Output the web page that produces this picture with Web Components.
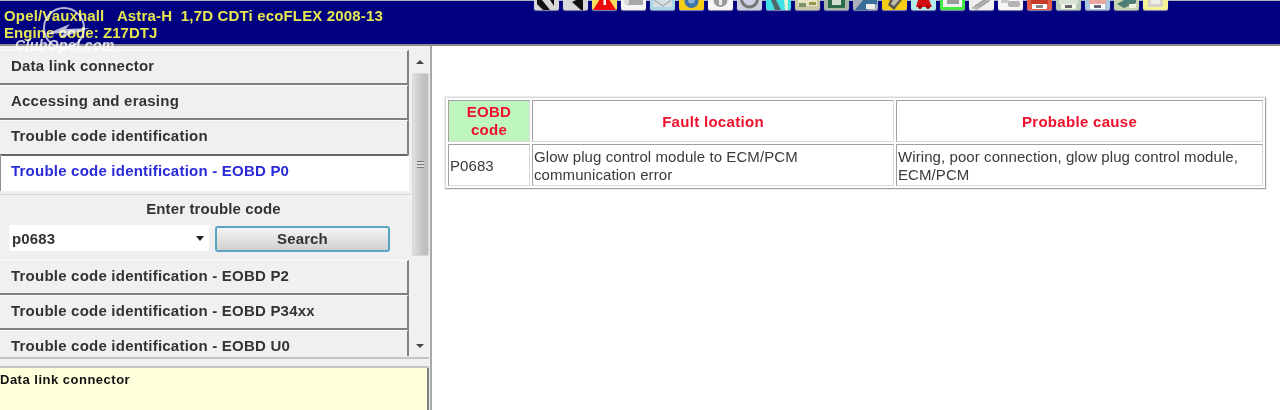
<!DOCTYPE html>
<html lang="en"><head><meta charset="utf-8"><title>Trouble code identification</title>
<style>
html,body{margin:0;padding:0;width:1280px;height:410px;overflow:hidden;background:#fff;font-family:"Liberation Sans",Arial,sans-serif}
</style></head><body>
<app-shell>
  <app-header slot="header" line1="Opel/Vauxhall   Astra-H  1,7D CDTi ecoFLEX 2008-13" line2="Engine code: Z17DTJ"></app-header>
  <side-panel slot="side">
    <menu-item>Data link connector</menu-item>
    <menu-item>Accessing and erasing</menu-item>
    <menu-item deep>Trouble code identification</menu-item>
    <menu-item active>Trouble code identification - EOBD P0</menu-item>
    <code-search value="p0683"></code-search>
    <menu-item>Trouble code identification - EOBD P2</menu-item>
    <menu-item>Trouble code identification - EOBD P34xx</menu-item>
    <menu-item>Trouble code identification - EOBD U0</menu-item>
    <info-box slot="info">Data link connector</info-box>
  </side-panel>
  <fault-table slot="main"></fault-table>
</app-shell>
<script>
function def(name, css, html){
  customElements.define(name, class extends HTMLElement{
    connectedCallback(){
      if(this.shadowRoot) return;
      const r=this.attachShadow({mode:'open'});
      r.innerHTML='<style>'+css+'</style>'+(typeof html==='function'?html(this):html);
    }
  });
}
const esc=s=>String(s||'').replace(/&/g,'&amp;').replace(/</g,'&lt;');

def('app-shell',`
:host{display:grid;grid-template-columns:432px 1fr;grid-template-rows:46px 364px;width:1280px;height:410px;filter:blur(.5px)}
.h{grid-column:1/3;display:block}
`,`<div class="h"><slot name="header"></slot></div><slot name="side"></slot><slot name="main"></slot>`);

const T=[
 ['#d8d8d8','<path d="M3 0h5l8 10H9L3 4z" fill="#111"/><path d="M16 0h4v6z" fill="#111"/>'],
 ['#d8d8d8','<path d="M13 0h7v10h-2L9 2z" fill="#111"/>'],
 ['#f5e060','<path d="M12.5 -8L24 10H1z" fill="#ee0a0a"/><rect x="11.5" y="0" width="2.5" height="5" fill="#fff"/>'],
 ['#f4f4f4','<rect x="6" y="0" width="16" height="5" fill="#a8a8a8"/><rect x="3" y="0" width="5" height="4" fill="#ddd"/>'],
 ['#a9d5e8','<rect x="3" y="0" width="19" height="7" fill="#d8dde0"/><path d="M4 0l9 6 8-6" stroke="#8a9aa6" fill="none"/>'],
 ['#f6cd16','<circle cx="12.5" cy="1" r="7" fill="#3f74a8"/><circle cx="12.5" cy="0" r="3.5" fill="#8db4d8"/>'],
 ['#f5f5f5','<circle cx="12.5" cy="0" r="7" fill="#9a9a9a"/><rect x="11" y="0" width="3" height="5" fill="#eee"/>'],
 ['#ccd0e2','<circle cx="12.5" cy="-1" r="8" fill="none" stroke="#777" stroke-width="3"/>'],
 ['#3fe0e6','<path d="M5 0h5l5 10H9z" fill="#4d6a6a"/><path d="M18 0h4v10h-3z" fill="#d8f4d4"/>'],
 ['#c8c8a6','<rect x="3" y="0" width="19" height="6" fill="#e6e6c4"/><rect x="14" y="2" width="7" height="3" fill="#9a9a48"/><rect x="4" y="3" width="7" height="4" fill="#7f8f70"/>'],
 ['#a9b7a8','<rect x="4" y="0" width="17" height="8" fill="#2e6a4e"/><rect x="8" y="0" width="9" height="5" fill="#cfe0cf"/>'],
 ['#aab0ba','<path d="M2 10L10 0h14v4l-10 6z" fill="#3a6e9a"/><rect x="13" y="4" width="9" height="5" fill="#ececec"/>'],
 ['#f6cd16','<path d="M8 0h12L12 10 6 5z" fill="#5c5c50"/><path d="M11 0h6l-5 6-3-2z" fill="#c0c0b0"/>'],
 ['#b4ecec','<path d="M7 0h11l3 7H5z" fill="#d40e0e"/><circle cx="9" cy="7" r="2" fill="#a00"/><circle cx="17" cy="7" r="2" fill="#a00"/>'],
 ['#46e646','<rect x="3" y="0" width="19" height="7" fill="#f2f2f2"/><rect x="7" y="0" width="12" height="4" fill="#9a9a9a"/>'],
 ['#f0f0f0','<path d="M2 8L14 0h8L8 10z" fill="#b8b8b8"/><path d="M6 6L16 0M10 7L20 1" stroke="#8a8a8a" fill="none"/>'],
 ['#f6f6f6','<rect x="10" y="1" width="12" height="6" rx="2" fill="#b4b4b4"/><rect x="3" y="0" width="8" height="3" fill="#c8c8c8"/>'],
 ['#e2604a','<rect x="4" y="0" width="17" height="4" fill="#c63a2a"/><rect x="5" y="4" width="15" height="5" rx="1" fill="#fff"/><rect x="9" y="5" width="7" height="3" fill="#888"/>'],
 ['#b8ccb8','<rect x="3" y="0" width="19" height="4" fill="#d6e2d2"/><rect x="5" y="4" width="15" height="5" fill="#f2f4ee"/><rect x="9" y="5" width="7" height="3" fill="#666"/>'],
 ['#a8c8e0','<rect x="4" y="0" width="17" height="4" fill="#e8a8a0"/><rect x="5" y="4" width="15" height="5" fill="#fff"/><rect x="9" y="5" width="7" height="3" fill="#667"/>'],
 ['#c8d4b0','<path d="M3 4L10 0h12v3L10 8z" fill="#4c7c74"/><rect x="15" y="4" width="7" height="4" fill="#eef0e0"/>'],
 ['#f6f094','<rect x="5" y="0" width="15" height="7" fill="#d4d4c8"/><rect x="8" y="0" width="9" height="4" fill="#eeeee4"/>']
];
def('tool-bar',`
:host{display:flex;gap:4px;height:10px;align-items:flex-start}
svg{display:block;width:25px;height:10px;box-shadow:0 1px 1px #8a8ab0;border-radius:0 0 2px 2px}
`,()=>T.map(t=>`<svg viewBox="0 0 25 10" style="background:${t[0]}" aria-hidden="true">${t[1]}</svg>`).join(''));

def('club-mark',`
:host{display:block;position:absolute;left:13px;top:9px;width:106px;height:46px;pointer-events:none}
svg{position:absolute;left:27px;top:0;width:48px;height:40px;overflow:visible}
span{position:absolute;left:2px;top:31px;font:italic bold 14px/9px "Liberation Sans",Arial,sans-serif;letter-spacing:.4px;color:rgba(255,255,255,.8);white-space:nowrap}
`,`<svg viewBox="0 0 48 40" aria-hidden="true"><circle cx="24" cy="18" r="20" fill="none" stroke="rgba(255,255,255,.7)" stroke-width="2"/><path d="M6 24L30 14 26 19 50 18 20 28 24 23z" fill="rgba(255,255,255,.72)"/></svg><span>ClubOpel.com</span>`);

def('app-header',`
:host{display:block;position:relative;z-index:2;height:46px;box-sizing:border-box;background:#000080;border-top:1px solid #b0b0c0;border-bottom:2px solid #8c8c8c;font:bold 15px/17px "Liberation Sans",Arial,sans-serif;color:#e6e650}
.row{display:flex;height:43px}
.t{padding:6px 0 0 4px;width:530px;box-sizing:border-box;white-space:pre;letter-spacing:.16px}
.t div{height:17px}
.t div+div{letter-spacing:.05px}
tool-bar{margin-left:4px;margin-top:-1px}
`,h=>`<div class="row"><div class="t"><div>${esc(h.getAttribute('line1'))}</div><div>${esc(h.getAttribute('line2'))}</div></div><tool-bar></tool-bar></div><club-mark></club-mark>`);

def('side-panel',`
:host{display:grid;grid-template-columns:411px 18px;grid-template-rows:310px 1fr;background:#f0f0f0;box-sizing:border-box;width:432px;height:364px;padding-right:3px;position:relative}
.list{padding-top:4px;overflow:hidden;height:310px;box-sizing:border-box;display:flex;flex-direction:column}
.info{grid-column:1/3;display:flex;flex-direction:column}
.sash{height:11px;box-sizing:border-box;border-top:2px solid #c4c4c4;border-bottom:2px solid #c4c4c4;margin-top:1px}
.rule{position:absolute;right:0;top:0;bottom:0;width:2px;background:#a8a8a8}
`,`<div class="list"><slot></slot></div><v-scroll></v-scroll><div class="info"><div class="sash"></div><slot name="info"></slot></div><div class="rule"></div>`);

def('menu-item',`
:host{display:flex;flex:none;align-items:center;height:35px;box-sizing:border-box;padding:0 0 3px 11px;margin-right:2px;background:#f0f0f0;border-top:1px solid #fafafa;border-right:2px solid #808080;border-bottom:2px solid #808080;font:bold 15px/17px "Liberation Sans",Arial,sans-serif;letter-spacing:.22px;color:#333;white-space:nowrap}
:host([deep]){border-bottom-color:#666;height:36px;padding-bottom:4px;border-radius:0 0 2px 2px}
:host([active]){background:#fff;color:#2a2ad8;border:0;border-left:1px solid #909090;padding:0 0 6px 10px;height:35px;margin-right:2px}
`,`<slot></slot>`);

def('code-search',`
:host{display:block;flex:none;height:66px;margin-top:3px;box-sizing:border-box;background:#f0f0f0;border-top:1px solid #d4d4d4;padding-top:5px;font:bold 15px/17px "Liberation Sans",Arial,sans-serif;letter-spacing:.12px;color:#333}
.l{text-align:center;height:25px;padding-left:16px}
.r{display:flex;gap:6px;padding-left:9px}
.c{width:200px;height:26px;background:#fff;box-sizing:border-box;padding:0 0 0 3px;display:flex;align-items:center;justify-content:space-between}
.c i{width:0;height:0;border:4px solid transparent;border-top:5px solid #222;border-bottom:0;margin-right:5px}
.b{width:175px;height:26px;box-sizing:border-box;border:2px solid #5da3c4;border-radius:3px;background:linear-gradient(#f4f4f4,#d0d0d0);text-align:center;line-height:22px;margin-top:1px}
`,h=>`<div class="l">Enter trouble code</div><div class="r"><div class="c"><span>${esc(h.getAttribute('value'))}</span><i></i></div><div class="b">Search</div></div>`);

def('v-scroll',`
:host{display:flex;flex-direction:column;align-items:center;width:18px;height:310px;background:#f0f0f0;position:relative}
.a{width:0;height:0;border:4px solid transparent;flex:none}
.up{border-bottom:4px solid #444;border-top:0;margin-top:14px}
.th{width:17px;height:183px;margin-top:9px;box-sizing:border-box;border:1px solid #d8d8d8;border-radius:2px;background:linear-gradient(90deg,#e0e0e0,#c4c4c4 60%,#bcbcbc);display:flex;align-items:center;justify-content:center;flex:none}
.g{width:7px;height:7px;background:repeating-linear-gradient(#777 0 1px,#ddd 1px 3px);margin-top:-1px}
.dn{border-top:4px solid #444;border-bottom:0;margin-top:88px}
`,`<div class="a up"></div><div class="th"><div class="g"></div></div><div class="a dn"></div>`);

def('info-box',`
:host{display:block;height:43px;width:429px;box-sizing:border-box;background:#ffffdc;border-right:2px solid #808080;font:bold 13px/15px "Liberation Sans",Arial,sans-serif;letter-spacing:.5px;color:#111;padding-top:4px}
`,`<slot></slot>`);

def('fault-table',`
:host{display:block;padding:51px 0 0 13px;background:#fff;font:15px/18px "Liberation Sans",Arial,sans-serif;color:#3a3a3a}
table{border-collapse:separate;border-spacing:2px;width:821px;height:91px;table-layout:fixed;border:1px solid #a0a0a0;border-left-color:#d8d8d8;border-top-color:#d8d8d8;box-sizing:border-box;box-shadow:0 0 0 1px #eeeeee}
td,th{border:1px solid #a0a0a0;border-right-color:#d8d8d8;border-bottom-color:#d8d8d8;padding:2px 1px 0;box-sizing:border-box;letter-spacing:.08px}
th{color:#f0102c;font-weight:bold;height:42px;line-height:18px;letter-spacing:.3px}
th.g{background:#bff5bf;padding:0 1px 1px}
td{text-align:left;vertical-align:middle;height:42px}
`,`<table><colgroup><col style="width:82px"><col style="width:362px"><col></colgroup>
<tr><th class="g">EOBD<br>code</th><th>Fault location</th><th>Probable cause</th></tr>
<tr><td>P0683</td><td>Glow plug control module to ECM/PCM<br>communication error</td><td>Wiring, poor connection, glow plug control module,<br>ECM/PCM</td></tr></table>`);
</script>
</body></html>
